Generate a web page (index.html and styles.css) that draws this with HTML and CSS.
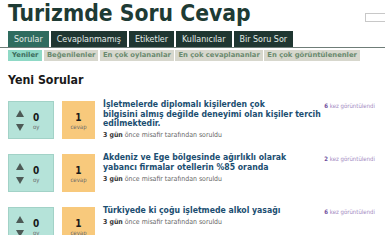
FILE: index.html
```html
<!DOCTYPE html>
<html lang="tr">
<head>
<meta charset="utf-8">
<title>Turizmde Soru Cevap</title>
<link rel="stylesheet" href="styles.css">
</head>
<body>
<div class="page">
  <header class="header">
    <h1 class="site-title">Turizmde Soru Cevap</h1>
    <input class="search" type="text">
  </header>
  <nav class="tabs">
    <a class="tab active">Sorular</a>
    <a class="tab">Cevaplanmamış</a>
    <a class="tab">Etiketler</a>
    <a class="tab">Kullanıcılar</a>
    <a class="tab">Bir Soru Sor</a>
  </nav>
  <div class="subtabs">
    <a class="subtab active">Yeniler</a>
    <a class="subtab">Beğenilenler</a>
    <a class="subtab">En çok oylananlar</a>
    <a class="subtab">En çok cevaplananlar</a>
    <a class="subtab">En çok görüntülenenler</a>
  </div>
  <h2 class="section-title">Yeni Sorular</h2>
  <div class="questions">
    <div class="question">
      <div class="votes">
        <div class="arrows">
          <svg class="arrow" viewBox="0 0 8 7" width="8" height="7"><polygon points="4,0 8,7 0,7"/></svg>
          <svg class="arrow" viewBox="0 0 8 7" width="8" height="7"><polygon points="0,0 8,0 4,7"/></svg>
        </div>
        <div class="count"><span class="num">0</span><span class="lbl">oy</span></div>
      </div>
      <div class="answers"><span class="num">1</span><span class="lbl">cevap</span></div>
      <div class="q-body">
        <a class="q-title">İşletmelerde diplomalı kişilerden çok bilgisini&nbsp;almış değilde deneyimi olan kişiler tercih edilmektedir.</a>
        <div class="meta"><b>3 gün</b> önce misafir tarafından soruldu</div>
      </div>
      <div class="views"><b>6</b> kez görüntülendi</div>
    </div>
    <div class="question">
      <div class="votes">
        <div class="arrows">
          <svg class="arrow" viewBox="0 0 8 7" width="8" height="7"><polygon points="4,0 8,7 0,7"/></svg>
          <svg class="arrow" viewBox="0 0 8 7" width="8" height="7"><polygon points="0,0 8,0 4,7"/></svg>
        </div>
        <div class="count"><span class="num">0</span><span class="lbl">oy</span></div>
      </div>
      <div class="answers"><span class="num">1</span><span class="lbl">cevap</span></div>
      <div class="q-body">
        <a class="q-title">Akdeniz ve Ege bölgesinde ağırlıklı olarak yabancı&nbsp;firmalar otellerin %85 oranda</a>
        <div class="meta"><b>3 gün</b> önce misafir tarafından soruldu</div>
      </div>
      <div class="views"><b>2</b> kez görüntülendi</div>
    </div>
    <div class="question">
      <div class="votes">
        <div class="arrows">
          <svg class="arrow" viewBox="0 0 8 7" width="8" height="7"><polygon points="4,0 8,7 0,7"/></svg>
          <svg class="arrow" viewBox="0 0 8 7" width="8" height="7"><polygon points="0,0 8,0 4,7"/></svg>
        </div>
        <div class="count"><span class="num">0</span><span class="lbl">oy</span></div>
      </div>
      <div class="answers"><span class="num">1</span><span class="lbl">cevap</span></div>
      <div class="q-body">
        <a class="q-title">Türkiyede ki çoğu işletmede alkol yasağı</a>
        <div class="meta"><b>3 gün</b> önce misafir tarafından soruldu</div>
      </div>
      <div class="views"><b>6</b> kez görüntülendi</div>
    </div>
  </div>
</div>
</body>
</html>
```

FILE: styles.css
```css
html, body {
  margin: 0;
  padding: 0;
  background: #fff;
  overflow: hidden;
}
body {
  font-family: "DejaVu Sans Condensed", "DejaVu Sans", Verdana, sans-serif;
  color: #222;
}
.page {
  width: 385px;
}
.header {
  display: flex;
  align-items: flex-start;
  padding: 0 0 0 8px;
  height: 31px;
}
.site-title {
  margin: 0;
  font-size: 22.7px;
  line-height: 26px;
  font-weight: bold;
  color: #1e3b34;
}
.search {
  margin: 13px -12px 0 auto;
  width: 32px;
  height: 9px;
  padding: 0;
  border: 1px solid #c8c8c8;
  box-sizing: border-box;
}
.tabs {
  display: flex;
  gap: 2px;
  padding-left: 8px;
  border-bottom: 1px solid #6f7d78;
  height: 16px;
}
.tab {
  display: block;
  font-size: 8.9px;
  line-height: 16px;
  height: 16px;
  padding: 0 6px;
  color: #e2ebe7;
  background: #1f3631;
}
.tab.active {
  background: #2f6c5f;
}
.subtabs {
  display: flex;
  gap: 1.5px;
  padding-left: 8px;
  margin-top: 2px;
}
.subtab {
  display: block;
  font-family: "DejaVu Sans", Verdana, sans-serif;
  font-size: 6.8px;
  font-weight: bold;
  line-height: 11px;
  height: 11px;
  padding: 0 3px;
  background: #d7d7cd;
  color: #6a8a6f;
}
.subtab.active {
  background: #8fd9c6;
  color: #3d6e5e;
  padding: 0 4px;
}
.section-title {
  margin: 11px 0 0 8px;
  font-size: 12.3px;
  line-height: 17px;
  font-weight: bold;
  color: #1a1a1a;
}
.questions {
  display: flex;
  flex-direction: column;
  gap: 15px;
  margin-top: 12px;
  padding-left: 8px;
}
.question {
  display: flex;
  align-items: flex-start;
}
.votes {
  flex: none;
  width: 46px;
  height: 38px;
  box-sizing: border-box;
  background: #b5e3d9;
  border: 1px solid #a2d2c7;
  display: flex;
  align-items: center;
  padding-left: 7px;
  gap: 9px;
}
.arrows {
  display: flex;
  flex-direction: column;
  gap: 7px;
  margin-top: 1px;
}
.arrow {
  display: block;
  fill: #4d5a56;
}
.count, .answers {
  display: flex;
  flex-direction: column;
  align-items: center;
}
.answers {
  flex: none;
  width: 33px;
  height: 38px;
  margin-left: 8px;
  background: #f8c97c;
  justify-content: center;
}
.num {
  font-size: 10px;
  font-weight: bold;
  line-height: 11px;
  color: #1a1a1a;
  margin-top: 3px;
}
.lbl {
  font-size: 6px;
  line-height: 8px;
  color: #6b6b6b;
}
.q-body {
  flex: none;
  width: 220px;
  margin-left: 8px;
  margin-top: -1px;
}
.q-title {
  display: block;
  font-size: 8.65px;
  font-weight: bold;
  line-height: 9.5px;
  color: #1b4e71;
}
.meta {
  font-size: 6.9px;
  line-height: 8px;
  margin-top: 2.5px;
  color: #666;
}
.meta b {
  color: #333;
}
.views {
  flex: none;
  white-space: nowrap;
  margin-left: auto;
  margin-right: 10px;
  font-size: 6px;
  line-height: 9px;
  color: #a38bbf;
}
.views b {
  color: #6f4e9c;
}
```
